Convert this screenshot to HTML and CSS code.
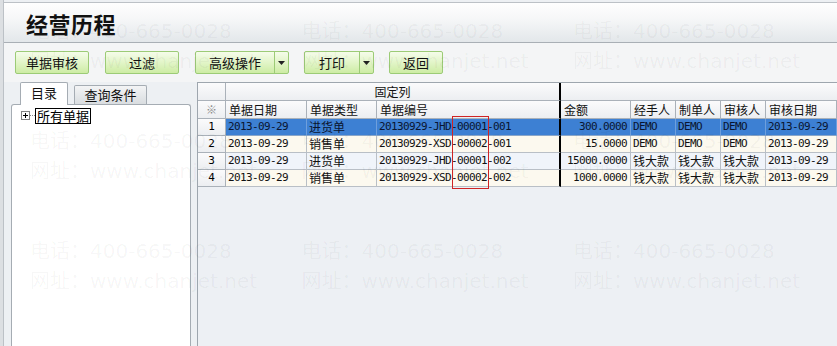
FILE: index.html
```html
<!DOCTYPE html>
<html lang="zh-CN">
<head>
<meta charset="utf-8">
<title>经营历程</title>
<link rel="stylesheet" href="styles.css">
</head>
<body>
<div class="app">
  <div class="frame">
    <header class="titlebar"><h1 class="title">经营历程</h1></header>
    <nav class="toolbar">
      <button class="btn w74">单据审核</button>
      <button class="btn w74">过滤</button>
      <div class="split">
        <button class="btn-main w78">高级操作</button>
        <span class="btn-arrow"><svg width="7" height="4" viewBox="0 0 7 4"><path d="M0 0h7L3.5 4z" fill="#222"/></svg></span>
      </div>
      <div class="split">
        <button class="btn-main w54">打印</button>
        <span class="btn-arrow"><svg width="7" height="4" viewBox="0 0 7 4"><path d="M0 0h7L3.5 4z" fill="#222"/></svg></span>
      </div>
      <button class="btn w54">返回</button>
    </nav>
    <div class="main">
      <aside class="side">
        <div class="tabs">
          <div class="tab active">目录</div>
          <div class="tab">查询条件</div>
        </div>
        <div class="panel">
          <div class="tree-item">
            <svg class="expander" width="9" height="9" viewBox="0 0 9 9"><rect x="0.5" y="0.5" width="8" height="8" fill="#fff" stroke="#848484"/><path d="M2 4.5h5M4.5 2v5" stroke="#000"/></svg>
            <span class="dots"></span>
            <span class="tree-label">所有单据</span>
          </div>
        </div>
      </aside>
      <section class="grid">
        <div class="hrow1">
          <div class="hc"></div>
          <div class="hc center thick">固定列</div>
          <div class="hc"></div>
        </div>
        <div class="row hrow2">
          <div class="hc center star">※</div>
          <div class="hc">单据日期</div>
          <div class="hc">单据类型</div>
          <div class="hc thick">单据编号</div>
          <div class="hc">金额</div>
          <div class="hc">经手人</div>
          <div class="hc">制单人</div>
          <div class="hc">审核人</div>
          <div class="hc">审核日期</div>
          <div class="hc"></div>
        </div>
        <div class="row sel">
          <div class="rn">1</div>
          <div class="c num">2013-09-29</div>
          <div class="c">进货单</div>
          <div class="c num thick">20130929-JHD-00001-001</div>
          <div class="c num right">300.0000</div>
          <div class="c num">DEMO</div>
          <div class="c num">DEMO</div>
          <div class="c num">DEMO</div>
          <div class="c num">2013-09-29</div>
          <div class="c"></div>
        </div>
        <div class="row cream">
          <div class="rn">2</div>
          <div class="c num">2013-09-29</div>
          <div class="c">销售单</div>
          <div class="c num thick">20130929-XSD-00002-001</div>
          <div class="c num right">15.0000</div>
          <div class="c num">DEMO</div>
          <div class="c num">DEMO</div>
          <div class="c num">DEMO</div>
          <div class="c num">2013-09-29</div>
          <div class="c"></div>
        </div>
        <div class="row blue">
          <div class="rn">3</div>
          <div class="c num">2013-09-29</div>
          <div class="c">进货单</div>
          <div class="c num thick">20130929-JHD-00001-002</div>
          <div class="c num right">15000.0000</div>
          <div class="c">钱大款</div>
          <div class="c">钱大款</div>
          <div class="c">钱大款</div>
          <div class="c num">2013-09-29</div>
          <div class="c"></div>
        </div>
        <div class="row cream">
          <div class="rn">4</div>
          <div class="c num">2013-09-29</div>
          <div class="c">销售单</div>
          <div class="c num thick">20130929-XSD-00002-002</div>
          <div class="c num right">1000.0000</div>
          <div class="c">钱大款</div>
          <div class="c">钱大款</div>
          <div class="c">钱大款</div>
          <div class="c num">2013-09-29</div>
          <div class="c"></div>
        </div>
        <div class="mark"></div>
      </section>
    </div>
  </div>
  <div class="watermark" aria-hidden="true">
    <div class="wm-item"><div>电话：400-665-0028</div><div>网址：www.chanjet.net</div></div>
    <div class="wm-item"><div>电话：400-665-0028</div><div>网址：www.chanjet.net</div></div>
    <div class="wm-item"><div>电话：400-665-0028</div><div>网址：www.chanjet.net</div></div>
    <div class="wm-item"><div>电话：400-665-0028</div><div>网址：www.chanjet.net</div></div>
    <div class="wm-item"><div>电话：400-665-0028</div><div>网址：www.chanjet.net</div></div>
    <div class="wm-item"><div>电话：400-665-0028</div><div>网址：www.chanjet.net</div></div>
    <div class="wm-item"><div>电话：400-665-0028</div><div>网址：www.chanjet.net</div></div>
    <div class="wm-item"><div>电话：400-665-0028</div><div>网址：www.chanjet.net</div></div>
    <div class="wm-item"><div>电话：400-665-0028</div><div>网址：www.chanjet.net</div></div>
  </div>
</div>
</body>
</html>
```
FILE: styles.css
```css
html, body {
  margin: 0;
  padding: 0;
}
body {
  width: 837px;
  height: 346px;
  overflow: hidden;
  font-family: "Noto Sans CJK SC", sans-serif;
  font-size: 12px;
  color: #000;
}
.app {
  position: relative;
  height: 346px;
  display: flex;
  box-sizing: border-box;
  padding-left: 3px;
  background: #dcdfe2;
  overflow: hidden;
}
.frame {
  flex: 1;
  min-width: 0;
  display: flex;
  flex-direction: column;
  border-left: 1px solid #bcc1c6;
  background: #edf0f3;
}
.titlebar {
  margin-top: 2px;
  height: 39px;
  border-top: 1px solid #bcc1c6;
  border-bottom: 1px solid #a9afb5;
  background: linear-gradient(#fefefe, #f6f7f8 40%, #e3e7ea);
  display: flex;
  align-items: center;
  padding-left: 22px;
  flex-shrink: 0;
}
.title {
  margin: 0;
  font-size: 22px;
  font-weight: 700;
  letter-spacing: 0.5px;
  color: #111;
}
.toolbar {
  height: 39px;
  box-sizing: border-box;
  padding: 8px 0 0 11px;
  display: flex;
  align-items: flex-start;
  gap: 16px;
  background: #f4f5f6;
  flex-shrink: 0;
}
.btn, .split {
  height: 23px;
  box-sizing: border-box;
  border: 1px solid #9ccb76;
  border-radius: 2px;
  background: linear-gradient(#f5fcea, #e2f5c8 50%, #cdeca4);
}
.btn {
  font-family: "Noto Sans CJK SC", sans-serif;
  font-size: 13px;
  line-height: 20px;
  padding: 0;
  color: #111;
}
.w74 { width: 74px; }
.w78 { width: 78px; }
.w54 { width: 54px; }
.split {
  display: flex;
  margin-right: -1px;
}
.btn-main {
  border: 0;
  background: transparent;
  font-family: "Noto Sans CJK SC", sans-serif;
  font-size: 13px;
  line-height: 20px;
  padding: 0;
  color: #111;
  height: 21px;
}
.btn-arrow {
  width: 14px;
  border-left: 1px solid #9ccb76;
  display: flex;
  align-items: center;
  justify-content: center;
  padding-top: 1px;
  box-sizing: border-box;
}
.main {
  flex: 1;
  min-height: 0;
  display: flex;
  gap: 6px;
  padding-left: 7px;
}
.side {
  width: 180px;
  display: flex;
  flex-direction: column;
}
.tabs {
  height: 22px;
  display: flex;
  align-items: flex-end;
  gap: 6px;
  padding-left: 9px;
}
.tab {
  width: 73px;
  height: 19px;
  box-sizing: border-box;
  border: 1px solid #a5acb3;
  border-bottom: 0;
  border-radius: 2px 2px 0 0;
  background: linear-gradient(#f3f4f5, #d9dde0);
  font-size: 13px;
  line-height: 18px;
  text-align: center;
  color: #111;
}
.tab.active {
  width: 48px;
  height: 23px;
  margin-bottom: -1px;
  background: #fff;
  line-height: 20px;
  position: relative;
}
.panel {
  flex: 1;
  border: 1px solid #a5acb3;
  border-bottom: 0;
  border-radius: 3px 3px 0 0;
  background: #fff;
}
.tree-item {
  display: flex;
  align-items: center;
  padding: 2px 0 0 9px;
  height: 17px;
}
.expander {
  display: block;
  flex-shrink: 0;
}
.dots {
  width: 5px;
  border-top: 1px dotted #888;
}
.tree-label {
  border: 1px solid #000;
  font-size: 13px;
  line-height: 14px;
  padding: 0 1px;
}
.grid {
  flex: 1;
  position: relative;
  border-top: 1px solid #9ea6ae;
  border-left: 1px solid #9ea6ae;
  background: #edf0f4;
  overflow: hidden;
  min-width: 0;
}
.hrow1 {
  display: grid;
  grid-template-columns: 28px 335px 300px;
  height: 18px;
}
.row {
  display: grid;
  grid-template-columns: 28px 81px 70px 184px 70px 45px 45px 45px 71px 40px;
  height: 17px;
}
.row.hrow2 { height: 18px; }
.hc {
  box-sizing: border-box;
  border-right: 1px solid #aab1b9;
  border-bottom: 1px solid #aab1b9;
  background: linear-gradient(#fbfbfc, #eceef1);
  padding: 0 3px;
  font-size: 12px;
  line-height: 17px;
  white-space: nowrap;
  overflow: hidden;
  color: #111;
}
.hc.center { text-align: center; }
.hc.star { color: #8a8a8a; font-size: 11px; }
.rn {
  box-sizing: border-box;
  border-right: 1px solid #aab1b9;
  border-bottom: 1px solid #aab1b9;
  background: linear-gradient(#fbfbfc, #eceef1);
  text-align: center;
  font-family: "DejaVu Sans Mono", monospace;
  font-size: 11px;
  line-height: 16px;
}
.c {
  box-sizing: border-box;
  border-right: 1px solid #b9bfc6;
  border-bottom: 1px solid #b9bfc6;
  padding: 0 2px;
  font-size: 12px;
  line-height: 16px;
  white-space: nowrap;
  overflow: hidden;
  color: #111;
}
.c.num {
  font-family: "DejaVu Sans Mono", monospace;
  font-size: 11px;
  letter-spacing: -0.62px;
}
.c.right { text-align: right; padding-right: 3px; }
.thick { border-right: 2px solid #000; }
.sel .c { background: #3d80d3; border-right-color: #6e9fdc; border-bottom-color: #8aa6c8; color: #0a1530; }
.sel .c.thick { border-right-color: #000; }
.cream .c { background: #fcf9ef; }
.blue .c { background: #f0f4fa; }
.mark {
  position: absolute;
  left: 254px;
  top: 33px;
  width: 37px;
  height: 73px;
  box-sizing: border-box;
  border: 1px solid #cf2424;
  pointer-events: none;
}
.watermark {
  position: absolute;
  left: 30px;
  top: 16px;
  display: grid;
  grid-template-columns: repeat(3, 271.5px);
  grid-auto-rows: 110px;
  pointer-events: none;
  font-family: "DejaVu Sans", "Noto Sans CJK SC", sans-serif;
  font-size: 20px;
  line-height: 30px;
  color: rgba(0, 0, 0, 0.045);
  white-space: nowrap;
}
```
